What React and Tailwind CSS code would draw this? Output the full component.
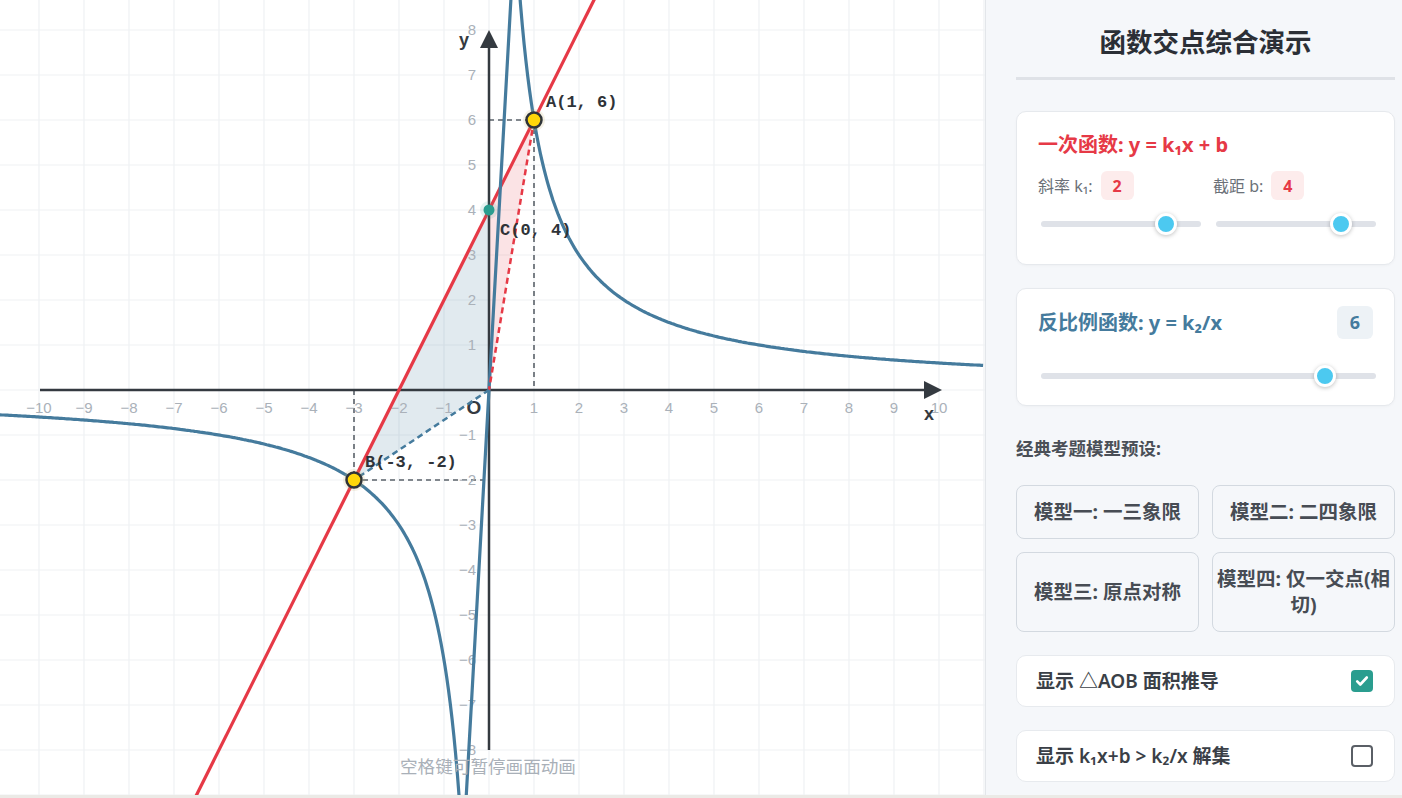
import React from 'react'

const OX = 489
const OY = 390
const U = 45
const px = (x) => OX + U * x
const py = (y) => OY - U * y

const RED = '#e63946'
const BLUE = '#457b9d'

function hyperbolaPath(k) {
  const pts = []
  for (let x = -10.9; x <= -0.58; x += 0.04) pts.push([x, k / x])
  pts.push([-0.58, k / -0.58])
  pts.push([0.58, k / 0.58])
  for (let x = 0.62; x <= 11; x += 0.04) pts.push([x, k / x])
  return pts.map(([x, y], i) => `${i ? 'L' : 'M'}${px(x).toFixed(1)} ${py(y).toFixed(1)}`).join(' ')
}

function Graph() {
  const vLines = []
  for (let k = -10; k <= 11; k++) vLines.push(px(k))
  const hLines = []
  for (let k = -9; k <= 8; k++) hLines.push(py(k))
  const xTicks = []
  for (let k = -10; k <= 10; k++) if (k) xTicks.push(k)
  const yTicks = []
  for (let k = -8; k <= 8; k++) if (k) yTicks.push(k)
  const A = [px(1), py(6)]
  const B = [px(-3), py(-2)]
  const C = [px(0), py(4)]
  const O = [OX, OY]
  const tickFont = "'Liberation Sans', Arial, sans-serif"
  const mono = "'Liberation Mono', 'DejaVu Sans Mono', monospace"

  return (
    <svg width="985" height="795" viewBox="0 0 985 795" className="block">
      {vLines.map((x) => (
        <line key={'v' + x} x1={x} y1="0" x2={x} y2="795" stroke="#eff1f4" strokeWidth="1.2" />
      ))}
      {hLines.map((y) => (
        <line key={'h' + y} x1="0" y1={y} x2="985" y2={y} stroke="#eff1f4" strokeWidth="1.2" />
      ))}

      {/* triangle AOB split by the y axis */}
      <polygon points={`${B.join(',')} ${C.join(',')} ${O.join(',')}`} fill="rgba(69,123,157,0.16)" />
      <polygon points={`${C.join(',')} ${A.join(',')} ${O.join(',')}`} fill="rgba(230,57,70,0.14)" />

      {/* projections */}
      <g stroke="#5b6169" strokeWidth="1.6" strokeDasharray="5 4" fill="none">
        <line x1={OX} y1={A[1]} x2={A[0]} y2={A[1]} />
        <line x1={A[0]} y1={A[1]} x2={A[0]} y2={OY} />
        <line x1={B[0]} y1={OY} x2={B[0]} y2={B[1]} />
        <line x1={B[0]} y1={B[1]} x2={OX} y2={B[1]} />
      </g>

      {/* axes */}
      <line x1="40" y1={OY} x2="926" y2={OY} stroke="#343a40" strokeWidth="2.5" />
      <polygon points="924,381 942,390 924,399" fill="#343a40" />
      <line x1={OX} y1="750" x2={OX} y2="46" stroke="#343a40" strokeWidth="2.5" />
      <polygon points="480,48 489,30 498,48" fill="#343a40" />

      <g fontFamily={tickFont} fontSize="15" fill="#aab1b9">
        {xTicks.map((k) => (
          <text key={'xt' + k} x={px(k)} y={OY + 23} textAnchor="middle">
            {k < 0 ? '\u2212' + -k : k}
          </text>
        ))}
        {yTicks.map((k) => (
          <text key={'yt' + k} x={OX - 13} y={py(k) + 5} textAnchor="end">
            {k < 0 ? '\u2212' + -k : k}
          </text>
        ))}
      </g>

      <g fontFamily={tickFont} fontWeight="700" fill="#343a40">
        <text x="474" y="414" fontSize="19" textAnchor="middle">O</text>
        <text x="929" y="420" fontSize="18" textAnchor="middle">x</text>
        <text x="464" y="46" fontSize="18" textAnchor="middle">y</text>
      </g>

      {/* curves */}
      <line x1={px(-7.2)} y1={py(-10.4)} x2={px(3.2)} y2={py(10.4)} stroke={RED} strokeWidth="3.2" />
      <path d={hyperbolaPath(6)} fill="none" stroke={BLUE} strokeWidth="3.2" strokeLinejoin="round" />

      <line x1={A[0]} y1={A[1]} x2={OX} y2={OY} stroke={RED} strokeWidth="2.5" strokeDasharray="6 4" />
      <line x1={OX} y1={OY} x2={B[0]} y2={B[1]} stroke={BLUE} strokeWidth="2.5" strokeDasharray="6 4" />

      {/* points */}
      <circle cx={C[0]} cy={C[1]} r="9" fill="rgba(42,157,143,0.12)" />
      <circle cx={C[0]} cy={C[1]} r="5.5" fill="#2a9d8f" />
      {[A, B].map(([x, y]) => (
        <g key={x}>
          <circle cx={x} cy={y} r="11" fill="rgba(200,180,110,0.18)" />
          <circle cx={x} cy={y} r="7.5" fill="#ffd60a" stroke="#2f3338" strokeWidth="2.5" />
        </g>
      ))}

      <g fontFamily={mono} fontWeight="700" fontSize="17" fill="#2f3338">
        <text x="546" y="107">A(1, 6)</text>
        <text x="365" y="467">B(-3, -2)</text>
        <text x="500" y="235">C(0, 4)</text>
      </g>
    </svg>
  )
}

function Slider({ pct, className = '' }) {
  return (
    <div className={`relative h-[22px] flex items-center ${className}`}>
      <div className="h-[6px] w-full rounded-full bg-[#dfe2e8]" />
      <div
        className="absolute top-0 h-[22px] w-[22px] -translate-x-1/2 rounded-full border-[3px] border-white bg-[#4cc9f0] shadow-[0_1px_4px_rgba(0,0,0,0.25)]"
        style={{ left: `${pct}%` }}
      />
    </div>
  )
}

function PresetButton({ children }) {
  return (
    <button
      type="button"
      className="rounded-[8px] border border-[#d3d9e0] bg-[#f5f7fa] px-0 py-[13px] text-[19.5px] font-bold leading-[26px] text-[#474c54]"
    >
      {children}
    </button>
  )
}

function ToggleRow({ label, checked }) {
  return (
    <div className="flex h-[52px] items-center justify-between rounded-[10px] border border-[#e7eaee] bg-white pl-[19px] pr-[21px]">
      <span className="text-[19px] font-semibold text-[#3a3f47]">{label}</span>
      {checked ? (
        <span className="flex h-[22px] w-[22px] items-center justify-center rounded-[4px] bg-[#2a9d8f]">
          <svg viewBox="0 0 16 16" className="h-[16px] w-[16px]" fill="none" stroke="white" strokeWidth="2.6" strokeLinecap="round" strokeLinejoin="round">
            <path d="M3.2 8.4l3.1 3.1 6.5-7" />
          </svg>
        </span>
      ) : (
        <span className="h-[22px] w-[22px] rounded-[4px] border-2 border-[#5a5f66] bg-white" />
      )}
    </div>
  )
}

export default function App() {
  return (
    <div className="h-[798px] w-full bg-[#ebeae6] font-['Noto_Sans','Noto_Sans_CJK_SC',sans-serif]">
      <div className="flex h-[795px] w-full overflow-hidden">
        <div className="relative w-[985px] shrink-0 overflow-hidden bg-white">
          <Graph />
          <div className="absolute bottom-[17px] left-[400px] text-[17.6px] leading-[24px] text-[#a9b0b8]">
            空格键可暂停画面动画
          </div>
        </div>

        <aside className="flex-1 overflow-hidden border-l border-[#e3e6ea] bg-[#f5f7fa] pl-[30px] pr-[7px]">
          <h1 className="border-b-[3px] border-[#dfe2e7] pb-[17px] pt-[24px] text-center text-[26.5px] font-bold leading-[36px] text-[#2b2f36]">
            函数交点综合演示
          </h1>

          <section className="mt-[31px] rounded-[10px] border border-[#e6e9ed] bg-white pb-[29px] pl-[21px] pr-[18px] pt-[19px] shadow-[0_1px_3px_rgba(0,0,0,0.03)]">
            <h2 className="text-[20px] font-bold leading-[28px] text-[#e63946]">一次函数: y = k₁x + b</h2>
            <div className="mt-[12px] grid grid-cols-2 gap-x-[12px]">
              <div>
                <div className="flex items-center gap-[8px] text-[16px] text-[#6b7178]">
                  <span>斜率 k₁:</span>
                  <span className="flex h-[29px] w-[33px] items-center justify-center rounded-[6px] bg-[#fdecec] font-bold text-[#e63946]">2</span>
                </div>
                <div className="mt-[13px] pl-[3px]">
                  <Slider pct={77.9} />
                </div>
              </div>
              <div>
                <div className="flex items-center gap-[8px] text-[16px] text-[#6b7178]">
                  <span>截距 b:</span>
                  <span className="flex h-[29px] w-[33px] items-center justify-center rounded-[6px] bg-[#fdecec] font-bold text-[#e63946]">4</span>
                </div>
                <div className="mt-[13px] pl-[3px]">
                  <Slider pct={78.2} />
                </div>
              </div>
            </div>
          </section>

          <section className="mt-[23px] rounded-[10px] border border-[#e6e9ed] bg-white px-[21px] pb-[18px] pt-[17px] shadow-[0_1px_3px_rgba(0,0,0,0.03)]">
            <div className="flex items-center justify-between">
              <h2 className="text-[20px] font-bold leading-[28px] text-[#457b9d]">反比例函数: y = k₂/x</h2>
              <span className="flex h-[33px] w-[36px] items-center justify-center rounded-[6px] bg-[#edf2f6] text-[18px] font-bold text-[#457b9d]">6</span>
            </div>
            <div className="mt-[26px] ml-[3px] mr-[-3px]">
              <Slider pct={84.8} />
            </div>
          </section>

          <h3 className="mt-[30px] text-[17.5px] font-bold leading-[24px] text-[#4a4f57]">经典考题模型预设:</h3>

          <div className="mt-[25px] grid grid-cols-2 gap-[13px]">
            <PresetButton>模型一: 一三象限</PresetButton>
            <PresetButton>模型二: 二四象限</PresetButton>
            <PresetButton>模型三: 原点对称</PresetButton>
            <PresetButton>
              <span className="whitespace-nowrap">模型四: 仅一交点(相</span>
              <br />
              切)
            </PresetButton>
          </div>

          <div className="mt-[23px] flex flex-col gap-[23px]">
            <ToggleRow label="显示 △AOB 面积推导" checked />
            <ToggleRow label="显示 k₁x+b > k₂/x 解集" />
          </div>
        </aside>
      </div>
    </div>
  )
}
